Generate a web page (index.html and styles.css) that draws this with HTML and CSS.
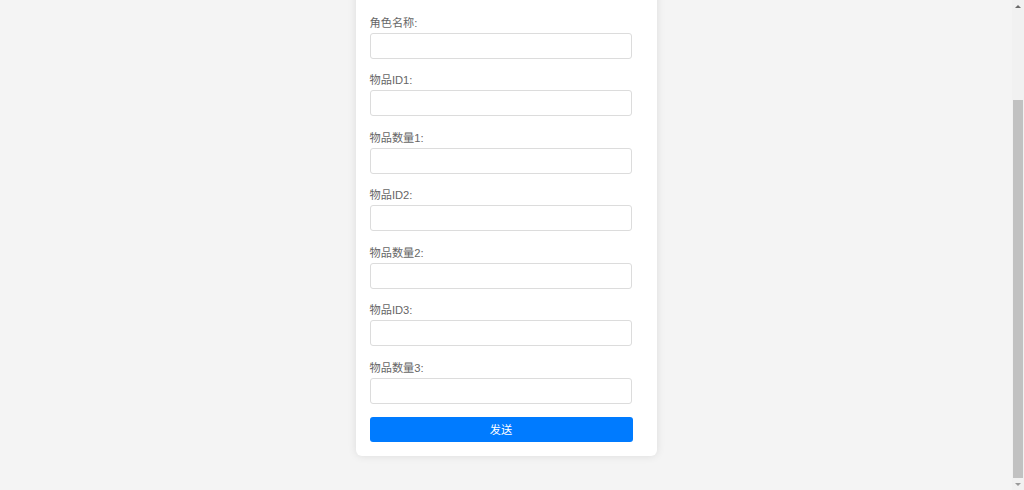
FILE: index.html
```html
<!DOCTYPE html>
<html lang="zh-CN">
<head>
  <meta charset="UTF-8" />
  <title>Sending Items</title>
  <link rel="stylesheet" href="styles.css">
</head>
<body>
  <div class="viewport" id="viewport">
    <div class="wrap">
      <form class="card" onsubmit="return false;">
        <h2>Sending Items</h2>

        <div class="field">
          <label for="role">角色名称:</label>
          <input type="text" id="role" />
        </div>
        <div class="field">
          <label for="id1">物品ID1:</label>
          <input type="text" id="id1" />
        </div>
        <div class="field">
          <label for="num1">物品数量1:</label>
          <input type="text" id="num1" />
        </div>
        <div class="field">
          <label for="id2">物品ID2:</label>
          <input type="text" id="id2" />
        </div>
        <div class="field">
          <label for="num2">物品数量2:</label>
          <input type="text" id="num2" />
        </div>
        <div class="field">
          <label for="id3">物品ID3:</label>
          <input type="text" id="id3" />
        </div>
        <div class="field">
          <label for="num3">物品数量3:</label>
          <input type="text" id="num3" />
        </div>

        <button type="submit" class="send-btn">发送</button>
      </form>
    </div>
  </div>

  <!-- page scrollbar -->
  <div class="scrollbar">
    <div class="sb-btn"><span class="arrow-up"></span></div>
    <div class="sb-track">
      <div class="sb-thumb"></div>
    </div>
    <div class="sb-btn"><span class="arrow-down"></span></div>
  </div>

  <script>
    const viewport = document.getElementById("viewport");
    viewport.scrollTop = viewport.scrollHeight;
  </script>
</body>
</html>
```

FILE: styles.css
```css
* {
  box-sizing: border-box;
}

html,
body {
  margin: 0;
  padding: 0;
  height: 100%;
}

body {
  display: flex;
  background-color: #f4f4f4;
  font-family: "Liberation Sans", "Noto Sans CJK SC", sans-serif;
  color: #666;
  overflow: hidden;
}

.viewport {
  flex: 1;
  height: 100vh;
  overflow: hidden;
}

/* classic light scrollbar */
.scrollbar {
  width: 12px;
  height: 100vh;
  display: flex;
  flex-direction: column;
  background-color: #f1f1f1;
}

.sb-btn {
  height: 12px;
  display: flex;
  align-items: center;
  justify-content: center;
}

.arrow-up {
  width: 0;
  height: 0;
  border-left: 3px solid transparent;
  border-right: 3px solid transparent;
  border-bottom: 3px solid #6a6a6a;
}

.arrow-down {
  width: 0;
  height: 0;
  border-left: 3px solid transparent;
  border-right: 3px solid transparent;
  border-top: 3px solid #9a9a9a;
}

.sb-track {
  flex: 1;
  display: flex;
  flex-direction: column;
  justify-content: flex-end;
  padding: 0 1px;
}

.sb-thumb {
  height: 378px;
  background-color: #c1c1c1;
}

.wrap {
  display: flex;
  justify-content: center;
  padding: 81px 0 34px;
}

.card {
  width: 301px;
  padding: 14px;
  background-color: #ffffff;
  border-radius: 6px;
  box-shadow: 0 0 8px rgba(0, 0, 0, 0.1);
}

.card h2 {
  margin: 0 0 14.5px 0;
  font-size: 19px;
  line-height: 22px;
  text-align: center;
  color: #333;
}

.field {
  margin-bottom: 14.5px;
}

.field label {
  display: block;
  font-size: 11.2px;
  line-height: 14px;
  margin-bottom: 3px;
  color: #666;
}

.field input {
  display: block;
  width: 262px;
  height: 26px;
  padding: 0 6px;
  font-size: 11.2px;
  border: 1px solid #dcdcdc;
  border-radius: 3px;
  background-color: #fff;
  outline: none;
}

.send-btn {
  display: block;
  width: 263px;
  height: 25px;
  margin-top: -1.5px;
  padding: 0;
  border: none;
  border-radius: 3px;
  background-color: #007bff;
  color: #ffffff;
  font-family: "Liberation Sans", "Noto Sans CJK SC", sans-serif;
  font-size: 11.2px;
  cursor: pointer;
}
```
